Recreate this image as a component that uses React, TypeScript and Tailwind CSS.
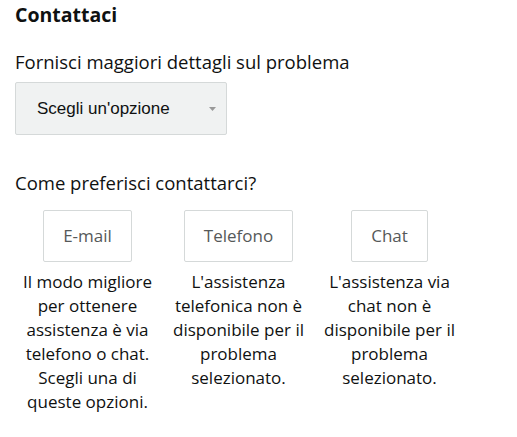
import React from "react";

const cols = [
  { label: "E-mail", text: "Il modo migliore per ottenere assistenza è via telefono o chat. Scegli una di queste opzioni." },
  { label: "Telefono", text: "L'assistenza telefonica non è disponibile per il problema selezionato." },
  { label: "Chat", text: "L'assistenza via chat non è disponibile per il problema selezionato." },
];

export default function App() {
  return (
    <div className="w-[517px] h-[437px] bg-white text-[#0f1111] px-[15px] pt-[2px]" style={{ fontFamily: '"Open Sans", "Noto Sans", sans-serif' }}>
      <h1 className="text-[19.5px] font-bold leading-[26px]">Contattaci</h1>
      <p className="mt-[22px] text-[18.5px] leading-[24px]">Fornisci maggiori dettagli sul problema</p>
      <div className="mt-[8px] w-[212px] h-[53px] bg-[#f0f2f2] border border-[#d5d9d9] rounded-[2px] flex items-center justify-between pl-[21px] pr-[10px]">
        <span className="text-[17px] text-[#0f1111]" style={{ fontFamily: '"Liberation Sans", Arial, sans-serif' }}>Scegli un'opzione</span>
        <svg width="7" height="4" viewBox="0 0 7 4"><path d="M0 0 L7 0 L3.5 4 Z" fill="#999" /></svg>
      </div>
      <p className="mt-[36px] text-[18.5px] leading-[24px]">Come preferisci contattarci?</p>
      <div className="mt-[15px] flex gap-[6px]">
        {cols.map((c) => (
          <div key={c.label} className="w-[145px] flex flex-col items-center">
            <div className="h-[52px] px-[19px] border border-[#d5d9d9] rounded-[2px] flex items-center text-[17px] text-[#565959]">{c.label}</div>
            <p className="mt-[8px] text-center text-[17px] leading-[24px]">{c.text}</p>
          </div>
        ))}
      </div>
    </div>
  );
}
